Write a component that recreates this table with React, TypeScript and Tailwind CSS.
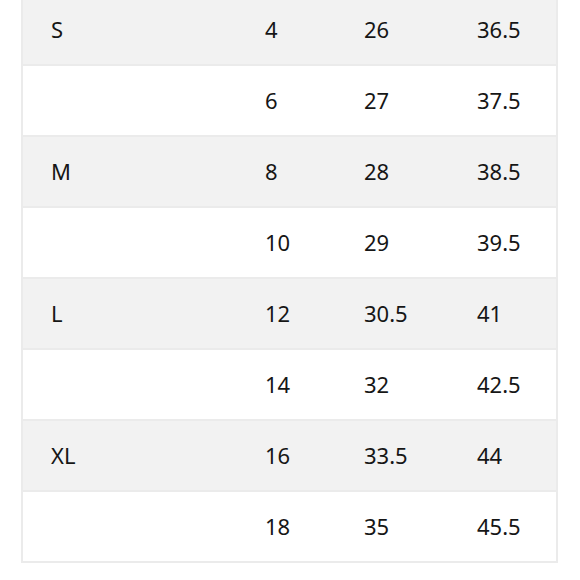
const ROWS: [string, string, string, string][] = [
  ["S", "4", "26", "36.5"],
  ["", "6", "27", "37.5"],
  ["M", "8", "28", "38.5"],
  ["", "10", "29", "39.5"],
  ["L", "12", "30.5", "41"],
  ["", "14", "32", "42.5"],
  ["XL", "16", "33.5", "44"],
  ["", "18", "35", "45.5"],
];

export default function App() {
  return (
    <div className="h-[580px] w-[580px] overflow-hidden bg-white">
      <div
        className="mt-[-5px] ml-[21px] w-[537px] border-x-2 border-[#ebebeb] text-[22px] text-[#161616]"
        style={{ fontFamily: '"Noto Sans", "Open Sans", sans-serif' }}
      >
        {ROWS.map((row, i) => (
          <div
            key={i}
            className={`grid h-[71px] grid-cols-[214px_99px_113px_1fr] items-center border-b-2 border-[#ebebeb] ${
              i % 2 === 0 ? "bg-[#f2f2f2]" : "bg-white"
            }`}
          >
            {row.map((cell, j) => (
              <div key={j} className="pb-[2px] pl-7 leading-none">
                {cell}
              </div>
            ))}
          </div>
        ))}
      </div>
    </div>
  );
}
